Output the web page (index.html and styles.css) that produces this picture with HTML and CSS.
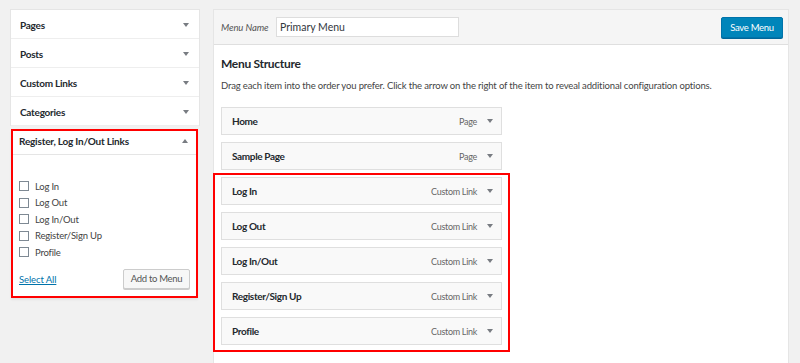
FILE: index.html
```html
<!DOCTYPE html>
<html>
<head>
<meta charset="utf-8">
<link rel="stylesheet" href="styles.css">
</head>
<body>
<div class="page">
  <aside class="side">
    <div class="acc">
      <div class="acc-row"><span>Pages</span><i class="down"></i></div>
      <div class="acc-row"><span>Posts</span><i class="down"></i></div>
      <div class="acc-row"><span>Custom Links</span><i class="down"></i></div>
      <div class="acc-row last"><span>Categories</span><i class="down"></i></div>
    </div>
    <div class="reg">
      <div class="reg-head"><span>Register, Log In/Out Links</span><i class="up"></i></div>
      <div class="reg-body">
        <ul class="checks">
          <li><span class="cb"></span>Log In</li>
          <li><span class="cb"></span>Log Out</li>
          <li><span class="cb"></span>Log In/Out</li>
          <li><span class="cb"></span>Register/Sign Up</li>
          <li><span class="cb"></span>Profile</li>
        </ul>
        <div class="reg-foot">
          <a class="sel" href="#">Select All</a>
          <span class="btn">Add to Menu</span>
        </div>
      </div>
    </div>
  </aside>
  <main class="main">
    <div class="head">
      <label class="mn">Menu Name</label>
      <div class="inp">Primary Menu</div>
      <span class="save">Save Menu</span>
    </div>
    <div class="body">
      <h3>Menu Structure</h3>
      <p class="desc">Drag each item into the order you prefer. Click the arrow on the right of the item to reveal additional configuration options.</p>
      <div class="items">
        <div class="item"><span class="t">Home</span><span class="k">Page</span><i class="down"></i></div>
        <div class="item"><span class="t">Sample Page</span><span class="k">Page</span><i class="down"></i></div>
        <div class="group">
          <div class="item"><span class="t">Log In</span><span class="k">Custom Link</span><i class="down"></i></div>
          <div class="item"><span class="t">Log Out</span><span class="k">Custom Link</span><i class="down"></i></div>
          <div class="item"><span class="t">Log In/Out</span><span class="k">Custom Link</span><i class="down"></i></div>
          <div class="item"><span class="t">Register/Sign Up</span><span class="k">Custom Link</span><i class="down"></i></div>
          <div class="item"><span class="t">Profile</span><span class="k">Custom Link</span><i class="down"></i></div>
        </div>
      </div>
    </div>
  </main>
</div>
</body>
</html>
```
FILE: styles.css
```css
* { box-sizing: border-box; }
html, body { margin: 0; height: 100%; }
body {
  background: #f1f1f1;
  font-family: Lato, "Open Sans", sans-serif;
  color: #23282d;
  font-size: 10px;
  overflow: hidden;
}
.page {
  display: flex;
  padding: 9px 0 0 10px;
  height: 100%;
  gap: 13px;
}
.side { width: 190px; flex: none; }
.acc {
  background: #fff;
  border: 1px solid #e5e5e5;
  border-bottom: none;
}
.acc-row {
  height: 29px;
  border-bottom: 1px solid #eee;
  display: flex;
  align-items: center;
  justify-content: space-between;
  padding: 1px 10px 0 9px;
  font-weight: 700;
  font-size: 10px;
  letter-spacing: -0.25px;
}
.down, .up {
  display: block;
  width: 0; height: 0;
  border-left: 3.5px solid transparent;
  border-right: 3.5px solid transparent;
}
.down { border-top: 4px solid #787c82; }
.up { border-bottom: 4px solid #787c82; }
.reg {
  margin: 3px 2px 0 1px;
  border: 2px solid #f00;
  background: #fff;
  box-shadow: 0 2px 2px rgba(0,0,0,0.06);
}
.reg-head {
  height: 24px;
  display: flex;
  align-items: flex-start;
  justify-content: space-between;
  padding: 4px 8px 0 6px;
  line-height: 13px;
  font-weight: 700;
  font-size: 10px;
  letter-spacing: -0.2px;
  border-bottom: 1px solid #e5e5e5;
  background: #fff;
}
.reg-head .up { margin-top: 4px; }
.reg-body { padding: 23px 6px 7px 6px; }
.checks { list-style: none; margin: 0; padding: 0; }
.checks li {
  height: 16.5px;
  display: flex;
  align-items: center;
  color: #444;
  font-size: 9.5px;
  letter-spacing: -0.2px;
}
.cb {
  width: 10px; height: 10px;
  border: 1px solid #7e8993;
  background: #fff;
  margin-right: 6px;
  flex: none;
}
.reg-foot {
  margin-top: 8px;
  display: flex;
  justify-content: space-between;
  align-items: center;
}
.sel { color: #0073aa; font-size: 9.5px; margin-top: 2px; letter-spacing: -0.1px; }
.btn {
  height: 20px;
  width: 67px;
  justify-content: center;
  border: 1px solid #ccc;
  background: #f7f7f7;
  border-radius: 2px;
  box-shadow: 0 1px 0 #ccc;
  display: flex;
  align-items: center;
  color: #555;
  font-size: 9.5px;
  letter-spacing: -0.3px;
}
.main {
  width: 576px;
  flex: none;
  background: #fff;
  border: 1px solid #e5e5e5;
  border-bottom: none;
}
.head {
  height: 35px;
  background: #f5f5f5;
  border-bottom: 1px solid #dfdfdf;
  display: flex;
  align-items: center;
  padding: 0 5px 0 7px;
}
.mn { font-style: italic; color: #555; font-size: 9.5px; width: 55px; letter-spacing: -0.1px; }
.inp {
  width: 183px; height: 20px;
  border: 1px solid #ddd;
  background: #fff;
  display: flex; align-items: center;
  padding: 0 3px;
  font-size: 10.5px;
  color: #32373c;
}
.save {
  margin-left: auto;
  height: 21px;
  width: 62px;
  background: #0085ba;
  border: 1px solid #0073aa;
  border-radius: 2px;
  color: #fff;
  display: flex; align-items: center; justify-content: center;
  font-size: 9.5px;
  letter-spacing: -0.3px;
  box-shadow: 0 1px 0 #006799;
}
.body { padding: 11px 7px 0 7px; }
h3 {
  margin: 0;
  font-size: 12px;
  font-weight: 700;
  line-height: 16px;
  letter-spacing: -0.3px;
  color: #23282d;
}
.desc {
  margin: 7px 0 0 0;
  font-size: 9.5px;
  line-height: 13px;
  letter-spacing: -0.15px;
  color: #444;
}
.items { margin-top: 15px; width: 281px; display: flex; flex-direction: column; gap: 7px; }
.group {
  display: flex; flex-direction: column; gap: 7px;
  margin: -4px -8px 0 -8px;
  padding: 2px 6px 5px 6px;
  border: 2px solid #f00;
}
.item {
  height: 28px;
  background: #f9f9f9;
  border: 1px solid #dfdfdf;
  display: flex;
  align-items: center;
  padding: 0 8px 0 10px;
}
.item .t { font-weight: 700; font-size: 10px; letter-spacing: -0.35px; flex: 1; }
.item .k { color: #666; font-size: 9px; letter-spacing: -0.3px; margin-right: 10px; }
```
